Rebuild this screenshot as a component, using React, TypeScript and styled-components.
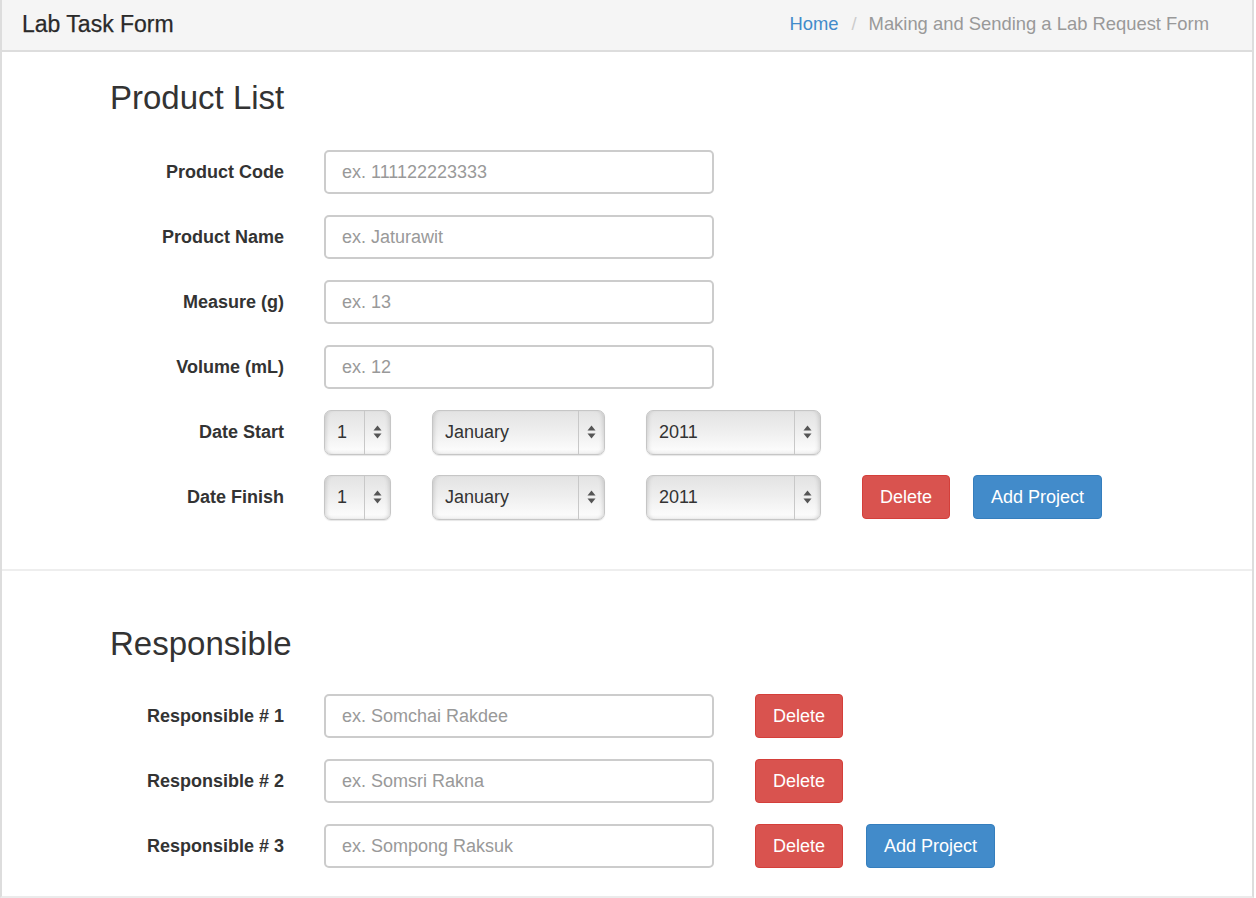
import React from 'react';
import styled, { createGlobalStyle } from 'styled-components';

const GlobalStyle = createGlobalStyle`
  body {
    margin: 0;
    background: #fff;
    font-family: "Liberation Sans", Arial, Helvetica, sans-serif;
    color: #333;
  }
`;

const Panel = styled.div`
  width: 1254px;
  box-sizing: border-box;
  border-left: 2px solid #dddddd;
  border-right: 2px solid #dddddd;
  border-bottom: 2px solid #ebebeb;
`;

const Header = styled.div`
  display: flex;
  align-items: center;
  justify-content: space-between;
  height: 50px;
  box-sizing: content-box;
  padding: 0 43px 0 20px;
  background: #f5f5f5;
  border-bottom: 2px solid #dddddd;
`;

const Title = styled.h1`
  margin: 0 0 2px;
  font-size: 23px;
  font-weight: normal;
  color: #2a2a2a;
  -webkit-text-stroke: 0.25px #2a2a2a;
`;

const Breadcrumb = styled.ol`
  display: flex;
  list-style: none;
  margin: 0 0 2px;
  padding: 0;
  font-size: 18.4px;
`;

const Crumb = styled.li<{ $active?: boolean }>`
  color: ${(p) => (p.$active ? '#999' : '#428bca')};
`;

const CrumbSep = styled.li`
  color: #ccc;
  padding: 0 12px 0 13px;
`;

const Section = styled.section<{ $top: number; $bottom: number; $divider?: boolean }>`
  padding: ${(p) => p.$top}px 0 ${(p) => p.$bottom}px 108px;
  border-bottom: ${(p) => (p.$divider ? '2px solid #eeeeee' : 'none')};
`;

const Heading = styled.h2<{ $gap: number }>`
  margin: 0 0 ${(p) => p.$gap}px;
  font-size: 33px;
  line-height: 36px;
  font-weight: normal;
  color: #333;
`;

const Rows = styled.div`
  display: flex;
  flex-direction: column;
  gap: 21px;
`;

const Row = styled.div`
  display: flex;
  align-items: center;
  height: 44px;
`;

const Label = styled.label`
  width: 174px;
  margin-right: 40px;
  text-align: right;
  font-weight: bold;
  font-size: 18px;
  color: #333;
`;

const Controls = styled.div`
  display: flex;
  align-items: center;
  gap: 41px;
`;

const ButtonGroup = styled.div`
  display: flex;
  gap: 23px;
`;

const TextInput = styled.input`
  width: 390px;
  height: 44px;
  box-sizing: border-box;
  border: 2px solid #cccccc;
  border-radius: 5px;
  padding: 0 16px;
  font-family: inherit;
  font-size: 18px;
  color: #333;
  outline: none;

  &::placeholder {
    color: #999;
  }
`;

const SelectBox = styled.div<{ $w: number }>`
  display: flex;
  width: ${(p) => p.$w}px;
  height: 45px;
  box-sizing: border-box;
  border: 1px solid #c6c6c6;
  border-radius: 7px;
  overflow: hidden;
  background: linear-gradient(#e3e3e3 0%, #eeeeee 45%, #fbfbfb 90%, #f0f0f0 100%);
  box-shadow: inset 4px 0 4px -3px rgba(0, 0, 0, 0.15),
    inset -4px 0 4px -3px rgba(0, 0, 0, 0.15), 0 1px 1px rgba(0, 0, 0, 0.1);
`;

const NativeSelect = styled.select`
  appearance: none;
  -webkit-appearance: none;
  flex: 1;
  min-width: 0;
  border: 0;
  background: transparent;
  padding: 0 0 0 12px;
  font-family: inherit;
  font-size: 18px;
  color: #333;
  outline: none;
`;

const Spinner = styled.span`
  width: 25px;
  flex-shrink: 0;
  display: flex;
  align-items: center;
  justify-content: center;
  border-left: 1px solid #c8c8c8;
`;

const Button = styled.button<{ $variant: 'danger' | 'primary' }>`
  height: 44px;
  padding: 0 17px;
  border-radius: 4px;
  border: 1px solid ${(p) => (p.$variant === 'danger' ? '#d43f3a' : '#357ebd')};
  background: ${(p) => (p.$variant === 'danger' ? '#d9534f' : '#428bca')};
  color: #fff;
  font-family: inherit;
  font-size: 18px;
  cursor: pointer;
`;

const months = [
  'January', 'February', 'March', 'April', 'May', 'June',
  'July', 'August', 'September', 'October', 'November', 'December',
];

const Arrows = () => (
  <svg width="9" height="14" viewBox="0 0 9 14">
    <path d="M4.5 0.5 L8.5 5.5 L0.5 5.5 Z" fill="#555" />
    <path d="M4.5 13.5 L8.5 8.5 L0.5 8.5 Z" fill="#555" />
  </svg>
);

const Select = ({ width, options }: { width: number; options: string[] }) => (
  <SelectBox $w={width}>
    <NativeSelect defaultValue={options[0]}>
      {options.map((o) => (
        <option key={o}>{o}</option>
      ))}
    </NativeSelect>
    <Spinner>
      <Arrows />
    </Spinner>
  </SelectBox>
);

const days = Array.from({ length: 31 }, (_, i) => String(i + 1));
const years = Array.from({ length: 10 }, (_, i) => String(2011 + i));

const DateRow = ({ label, children }: { label: string; children?: React.ReactNode }) => (
  <Row>
    <Label>{label}</Label>
    <Controls>
      <Select width={67} options={days} />
      <Select width={173} options={months} />
      <Select width={175} options={years} />
      {children}
    </Controls>
  </Row>
);

const productFields = [
  { label: 'Product Code', placeholder: 'ex. 111122223333' },
  { label: 'Product Name', placeholder: 'ex. Jaturawit' },
  { label: 'Measure (g)', placeholder: 'ex. 13' },
  { label: 'Volume (mL)', placeholder: 'ex. 12' },
];

const people = ['ex. Somchai Rakdee', 'ex. Somsri Rakna', 'ex. Sompong Raksuk'];

const App = () => {
  return (
    <>
      <GlobalStyle />
      <Panel>
        <Header>
          <Title>Lab Task Form</Title>
          <Breadcrumb>
            <Crumb>Home</Crumb>
            <CrumbSep>/</CrumbSep>
            <Crumb $active>Making and Sending a Lab Request Form</Crumb>
          </Breadcrumb>
        </Header>

        <Section $top={28} $bottom={50} $divider>
          <Heading $gap={34}>Product List</Heading>
          <Rows>
            {productFields.map((f) => (
              <Row key={f.label}>
                <Label>{f.label}</Label>
                <TextInput placeholder={f.placeholder} />
              </Row>
            ))}
            <DateRow label="Date Start" />
            <DateRow label="Date Finish">
              <ButtonGroup>
                <Button $variant="danger">Delete</Button>
                <Button $variant="primary">Add Project</Button>
              </ButtonGroup>
            </DateRow>
          </Rows>
        </Section>

        <Section $top={55} $bottom={28}>
          <Heading $gap={32}>Responsible</Heading>
          <Rows>
            {people.map((p, i) => (
              <Row key={p}>
                <Label>Responsible # {i + 1}</Label>
                <Controls>
                  <TextInput placeholder={p} />
                  <ButtonGroup>
                    <Button $variant="danger">Delete</Button>
                    {i === people.length - 1 && <Button $variant="primary">Add Project</Button>}
                  </ButtonGroup>
                </Controls>
              </Row>
            ))}
          </Rows>
        </Section>
      </Panel>
    </>
  );
};

export default App;
